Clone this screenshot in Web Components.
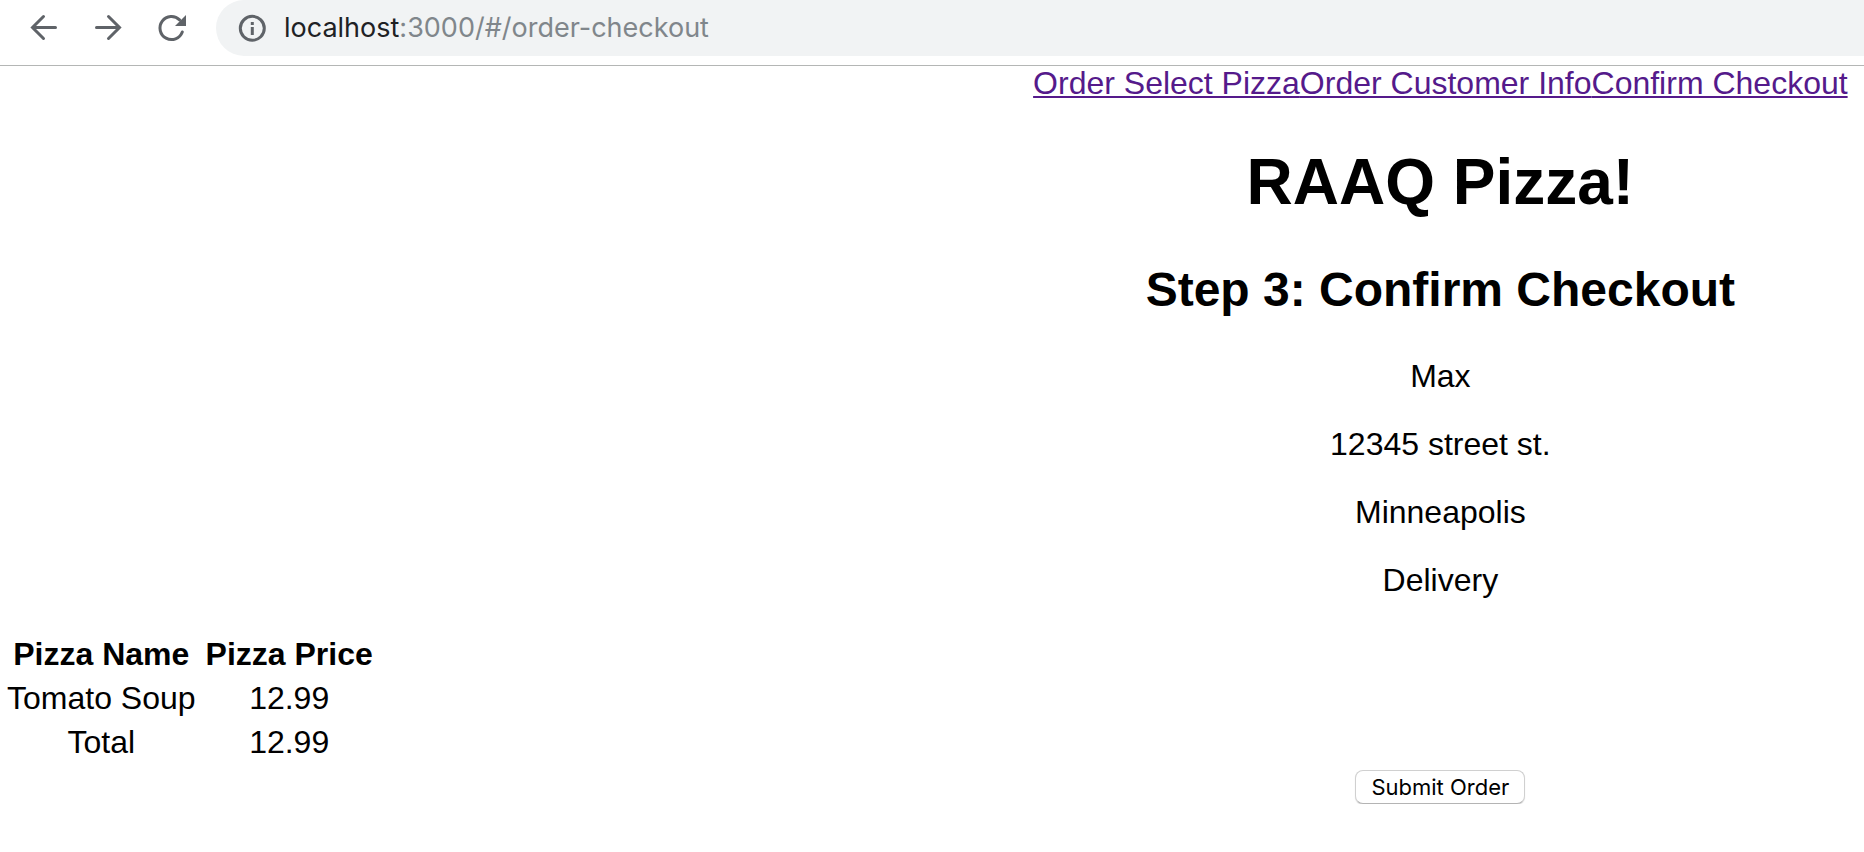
<!DOCTYPE html>
<html lang="en">
<head>
<meta charset="utf-8">
<title>RAAQ Pizza</title>
<style>
body { margin: 0; background: #fff; color: #000; font: 32px/36px "Liberation Sans", Arial, sans-serif; overflow-x: hidden; }
</style>
</head>
<body>
<browser-bar host="localhost" path=":3000/#/order-checkout"></browser-bar>
<order-checkout></order-checkout>
<script>
class BrowserBar extends HTMLElement {
  connectedCallback() {
    const root = this.attachShadow({ mode: "open" });
    root.innerHTML = `
      <style>
        :host { display: flex; align-items: flex-start; height: 65px; border-bottom: 1px solid #b4b6b5; background: #fff; color: #5f6368; }
        nav { display: flex; gap: 24px; padding: 8px 24px 0 24px; }
        button { display: block; width: 40px; height: 40px; padding: 0; border: 0; background: none; color: inherit; }
        svg { display: block; width: 40px; height: 40px; fill: none; stroke: #5f6368; stroke-width: 3; stroke-linecap: round; }
        .address { flex: 1; display: flex; align-items: center; gap: 12px; height: 56px; padding-left: 16px; border-radius: 28px 0 0 28px; background: #f1f3f4; font: 27px/56px Inter, Roboto, sans-serif; color: #80868b; white-space: pre; }
        .host { color: #202124; }
      </style>
      <nav aria-label="Browser">
        <button aria-label="Back"><svg viewBox="0 0 40 40"><path d="M31.500 19.500H9M19.500 8.500L8.500 19.500L19.500 30.500"/></svg></button>
        <button aria-label="Forward"><svg viewBox="0 0 40 40"><path d="M8.500 19.500H31M20.500 8.500L31.500 19.500L20.500 30.500"/></svg></button>
        <button aria-label="Reload"><svg viewBox="0 0 40 40"><path d="M27.600 11.900A11.500 11.500 0 1 0 30.300 24"/><path d="M34 7V18H23Z" fill="#5f6368" stroke="none"/></svg></button>
      </nav>
      <div class="address">
        <svg viewBox="0 0 40 40" aria-hidden="true"><circle cx="20.300" cy="20.300" r="12"/><path d="M20.300 19V27M20.300 14V17" stroke-linecap="butt"/></svg>
        <div><span class="host"></span><span class="path"></span></div>
      </div>`;
    root.querySelector(".host").textContent = this.getAttribute("host");
    root.querySelector(".path").textContent = this.getAttribute("path");
  }
}

class StepLinks extends HTMLElement {
  connectedCallback() {
    this.attachShadow({ mode: "open" }).innerHTML = `
      <style>
        :host { display: block; white-space: nowrap; line-height: 34px; }
        nav { display: flex; justify-content: center; }
        a { color: #551a8b; text-decoration: underline; text-decoration-thickness: 2px; text-underline-offset: 2px; text-decoration-skip-ink: none; }
      </style>
      <nav aria-label="Order steps"><a href="#/">Order Select Pizza</a><a href="#/order-customer">Order Customer Info</a><a href="#/order-checkout">Confirm Checkout</a></nav>`;
  }
}

class CustomerInfo extends HTMLElement {
  connectedCallback() {
    this.attachShadow({ mode: "open" }).innerHTML = `
      <style>
        :host { display: block; }
        ::slotted(p) { margin: 0 0 32px; }
      </style>
      <slot></slot>`;
  }
}

class PizzaTable extends HTMLElement {
  connectedCallback() {
    this.attachShadow({ mode: "open" }).innerHTML = `
      <style>
        :host { display: block; }
        table { border-collapse: separate; border-spacing: 4px; text-align: center; white-space: nowrap; }
        th, td { padding: 2px 3px; }
      </style>
      <table>
        <thead><tr><th>Pizza Name</th><th>Pizza Price</th></tr></thead>
        <tbody>
          <tr><td>Tomato Soup</td><td>12.99</td></tr>
          <tr><td>Total</td><td>12.99</td></tr>
        </tbody>
      </table>`;
  }
}

class SubmitButton extends HTMLElement {
  connectedCallback() {
    this.attachShadow({ mode: "open" }).innerHTML = `
      <style>
        :host { display: block; }
        button { display: block; margin: 0 auto; height: 34px; width: 170px; padding: 0; border: 1px solid #d0d0d0; border-bottom-color: #b4b4b4; border-radius: 8px; background: #fff; box-shadow: 0 1px 1px #0002; color: #000; font: 22px/32px Inter, Roboto, sans-serif; white-space: nowrap; }
      </style>
      <button type="submit"><slot></slot></button>`;
  }
}

class OrderCheckout extends HTMLElement {
  connectedCallback() {
    this.attachShadow({ mode: "open" }).innerHTML = `
      <style>
        :host { display: block; }
        main { display: grid; grid-template-columns: 6fr 5fr; text-align: center; }
        .column { grid-column: 2; min-width: 0; }
        pizza-table { grid-column: 1 / -1; }
        h1 { margin: 46px 0 44px; font-size: 64px; line-height: 72px; }
        h2 { margin: 0 0 40px; font-size: 48px; line-height: 56px; }
        submit-button { margin-top: 4px; }
      </style>
      <main>
        <div class="column">
          <step-links></step-links>
          <h1>RAAQ Pizza!</h1>
          <h2>Step 3: Confirm Checkout</h2>
          <customer-info><p>Max</p><p>12345 street st.</p><p>Minneapolis</p><p>Delivery</p></customer-info>
        </div>
        <pizza-table></pizza-table>
        <submit-button class="column">Submit Order</submit-button>
      </main>`;
  }
}

customElements.define("browser-bar", BrowserBar);
customElements.define("step-links", StepLinks);
customElements.define("customer-info", CustomerInfo);
customElements.define("pizza-table", PizzaTable);
customElements.define("submit-button", SubmitButton);
customElements.define("order-checkout", OrderCheckout);
</script>
</body>
</html>
